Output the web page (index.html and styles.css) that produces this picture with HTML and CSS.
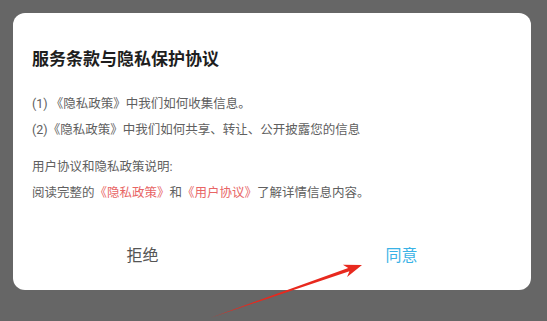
FILE: index.html
```html
<!DOCTYPE html>
<html lang="zh-CN">
<head>
<meta charset="utf-8">
<title>服务条款与隐私保护协议</title>
<link rel="stylesheet" href="styles.css">
</head>
<body>
<div class="dialog">
  <div class="content">
    <h1 class="title">服务条款与隐私保护协议</h1>
    <div class="group">
      <p class="line">(1) 《隐私政策》中我们如何收集信息。</p>
      <p class="line">(2)《隐私政策》中我们如何共享、转让、公开披露您的信息</p>
    </div>
    <div class="group group-2">
      <p class="line">用户协议和隐私政策说明:</p>
      <p class="line">阅读完整的<span class="link">《隐私政策》</span>和<span class="link">《用户协议》</span>了解详情信息内容。</p>
    </div>
  </div>
  <div class="actions">
    <button class="btn btn-reject">拒绝</button>
    <button class="btn btn-agree">同意</button>
  </div>
</div>
<svg class="arrow" width="547" height="321" viewBox="0 0 547 321">
  <polygon points="210,318 348.2,267.9 342.9,264.8 362,265 347.1,277 349.4,271.3" fill="#e8291e"/>
</svg>
</body>
</html>
```
FILE: styles.css
```css
html, body {
  margin: 0;
  padding: 0;
}
body {
  width: 547px;
  height: 321px;
  background: #666666;
  font-family: Roboto, "Noto Sans CJK SC", sans-serif;
  position: relative;
  overflow: hidden;
}
.dialog {
  margin: 13px 0 0 13px;
  width: 518px;
  height: 277px;
  background: #ffffff;
  border-radius: 12px;
  display: flex;
  flex-direction: column;
  box-sizing: border-box;
}
.content {
  padding: 34px 19px 0 19px;
}
.title {
  margin: 0;
  font-size: 17px;
  line-height: 24px;
  font-weight: bold;
  color: #1e1e1e;
}
.group {
  margin-top: 19.5px;
}
.group-2 {
  margin-top: 11px;
}
.line {
  margin: 0;
  font-size: 12.5px;
  line-height: 26px;
  color: #606060;
  white-space: nowrap;
}
.link {
  color: #e86565;
}
.actions {
  margin-top: auto;
  margin-bottom: 11px;
  display: flex;
  height: 50px;
}
.btn {
  flex: 1;
  border: none;
  background: transparent;
  font-family: Roboto, "Noto Sans CJK SC", sans-serif;
  font-size: 16px;
  padding: 0;
}
.btn-reject {
  color: #555555;
}
.btn-agree {
  color: #3ab2e6;
}
.arrow {
  position: absolute;
  left: 0;
  top: 0;
}
```
